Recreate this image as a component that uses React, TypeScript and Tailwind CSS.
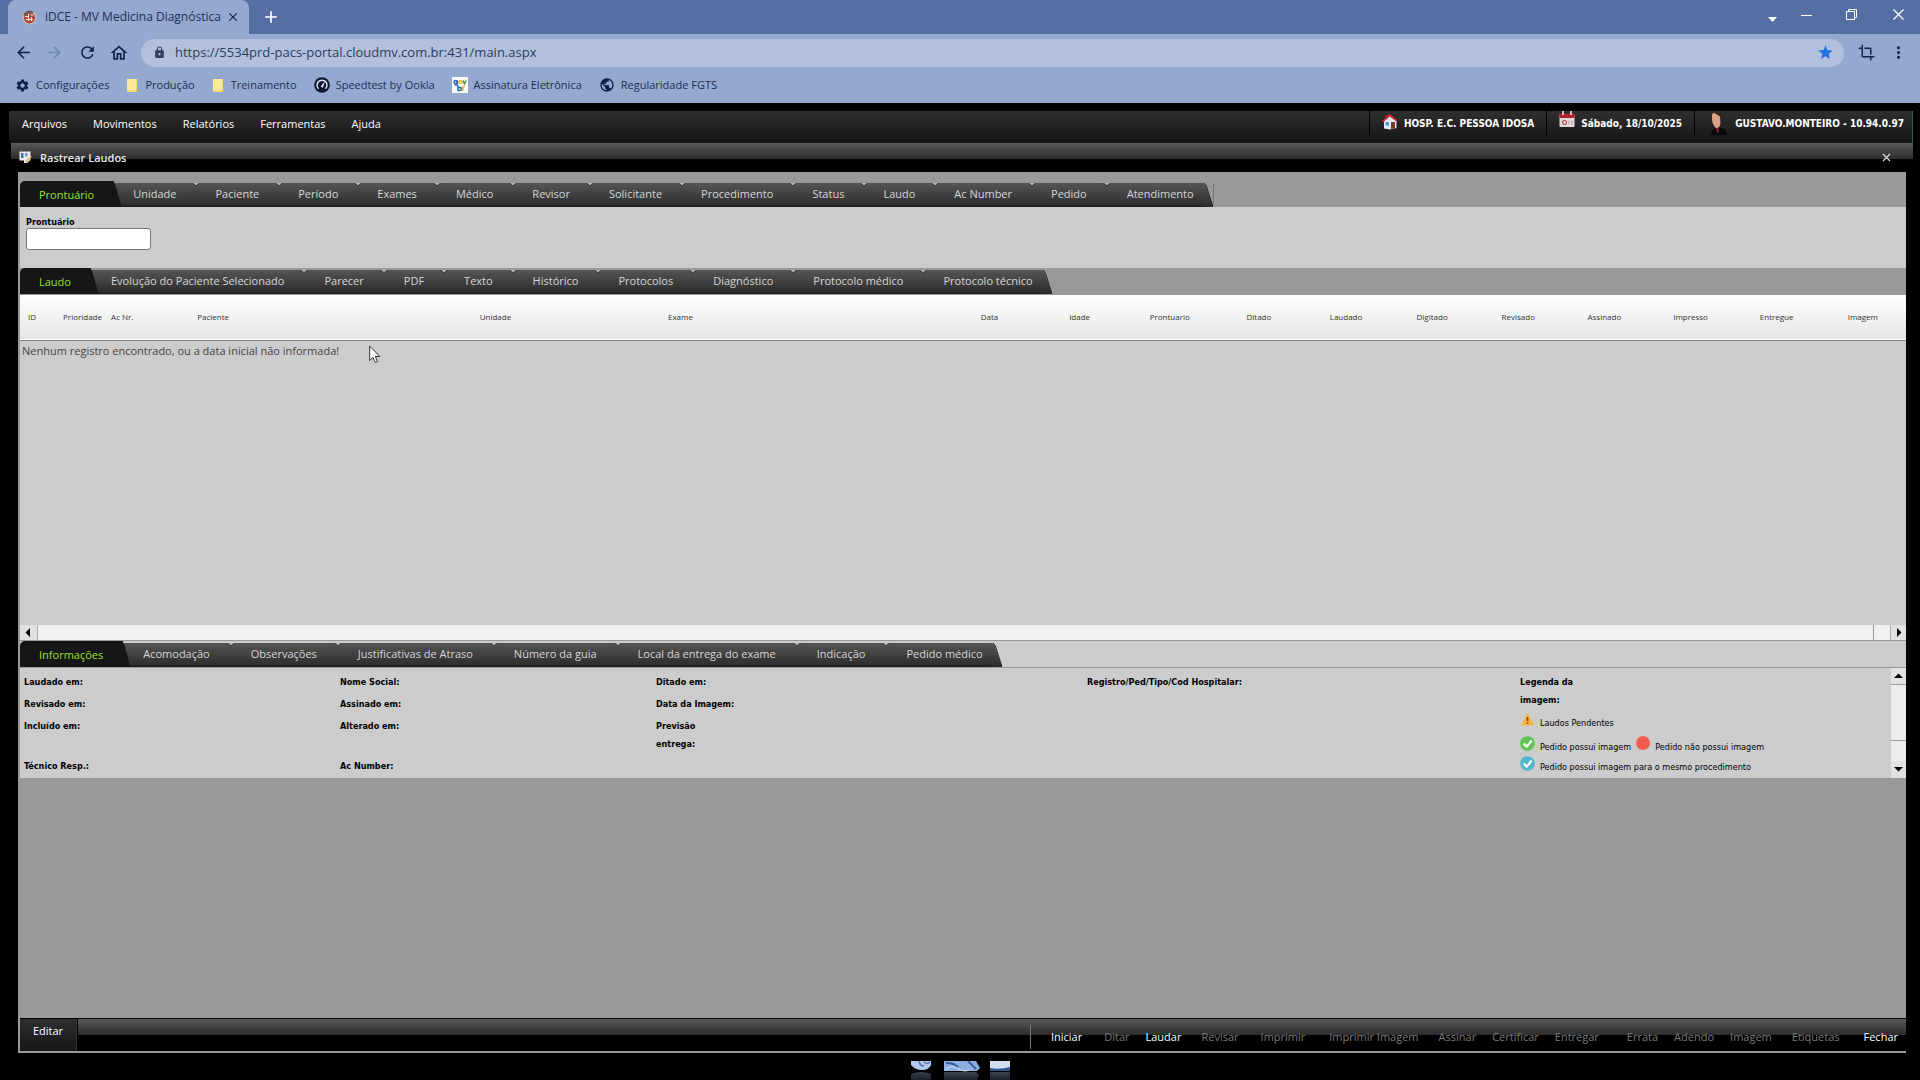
import type { ReactNode } from "react";
import {
  MdArrowBack,
  MdArrowForward,
  MdRefresh,
  MdOutlineHome,
  MdLock,
  MdStar,
  MdCrop,
  MdMoreVert,
  MdSettings,
  MdClose,
  MdAdd,
  MdPublic,
} from "react-icons/md";

const searchTabs = [
  "Prontuário", "Unidade", "Paciente", "Período", "Exames", "Médico", "Revisor", "Solicitante",
  "Procedimento", "Status", "Laudo", "Ac Number", "Pedido", "Atendimento",
];

const reportTabs = [
  "Laudo", "Evolução do Paciente Selecionado", "Parecer", "PDF", "Texto", "Histórico",
  "Protocolos", "Diagnóstico", "Protocolo médico", "Protocolo técnico",
];

const infoTabs = [
  "Informações", "Acomodação", "Observações", "Justificativas de Atraso", "Número da guia",
  "Local da entrega do exame", "Indicação", "Pedido médico",
];

const columns = [
  { name: "ID", col: "w-[35px]", align: "text-left pl-2" },
  { name: "Prioridade", col: "w-[48px]", align: "text-left pl-2" },
  { name: "Ac Nr.", col: "w-[86px]", align: "text-left pl-2" },
  { name: "Paciente", col: "w-[282px]", align: "text-left pl-2" },
  { name: "Unidade", col: "w-[188px]", align: "text-left pl-2" },
  { name: "Exame", col: "w-[284px]", align: "text-left pl-2" },
  { name: "Data", col: "w-[90px]", align: "text-center" },
  { name: "Idade", col: "w-[90px]", align: "text-center" },
  { name: "Prontuario", col: "w-[90px]", align: "text-center" },
  { name: "Ditado", col: "w-[88px]", align: "text-center" },
  { name: "Laudado", col: "w-[86px]", align: "text-center" },
  { name: "Digitado", col: "w-[86px]", align: "text-center" },
  { name: "Revisado", col: "w-[86px]", align: "text-center" },
  { name: "Assinado", col: "w-[86px]", align: "text-center" },
  { name: "Impresso", col: "w-[86px]", align: "text-center" },
  { name: "Entregue", col: "w-[86px]", align: "text-center" },
  { name: "Imagem", col: "w-[86px]", align: "text-center" },
];

const actions = [
  { name: "Iniciar", enabled: true, space: "ml-5" },
  { name: "Ditar", enabled: false, space: "ml-[22px]" },
  { name: "Laudar", enabled: true, space: "ml-4" },
  { name: "Revisar", enabled: false, space: "ml-5" },
  { name: "Imprimir", enabled: false, space: "ml-[22px]" },
  { name: "Imprimir Imagem", enabled: false, space: "ml-6" },
  { name: "Assinar", enabled: false, space: "ml-5" },
  { name: "Certificar", enabled: false, space: "ml-4" },
  { name: "Entregar", enabled: false, space: "ml-4" },
  { name: "Errata", enabled: false, space: "ml-7" },
  { name: "Adendo", enabled: false, space: "ml-4" },
  { name: "Imagem", enabled: false, space: "ml-4" },
  { name: "Etiquetas", enabled: false, space: "ml-5" },
  { name: "Fechar", enabled: true, space: "ml-6" },
];

function FolderIcon() {
  return (
    <svg width="13" height="15" viewBox="0 0 13 15" aria-hidden="true">
      <path d="M1 1h10v11h1v2H1z" fill="#f6dc7c" />
      <path d="M1 1h9v11H1z" fill="#fde99a" />
      <path d="M10 12h2v2h-2z" fill="#e3b94c" />
    </svg>
  );
}

function FaviconIcon() {
  return (
    <svg width="15" height="15" viewBox="0 0 15 15" aria-hidden="true">
      <circle cx="7.5" cy="7.5" r="7" fill="#c9b9b4" />
      <circle cx="7.5" cy="7.8" r="5.6" fill="#a84a3c" />
      <path d="M3 6.5h3.5M8.5 5h3M4 9.5h7M6.5 4v7M9.5 7v4" stroke="#f2dcd6" strokeWidth="1" />
      <path d="M2 5.500a6 6 0 0 1 9-3" stroke="#54504f" strokeWidth="1.500" fill="none" />
    </svg>
  );
}

function SpeedIcon() {
  return (
    <svg width="16" height="16" viewBox="0 0 16 16" aria-hidden="true">
      <circle cx="8" cy="8" r="7.8" fill="#10172e" />
      <path d="M4.600 11.800a5 5 0 1 1 6.800 0" stroke="#dfe7f8" strokeWidth="1.500" fill="none" />
      <path d="M7 9.500 10.200 5.500 8.800 10.300z" fill="#dfe7f8" stroke="#dfe7f8" strokeWidth=".6" />
    </svg>
  );
}

function GovIcon() {
  return (
    <svg width="16" height="16" viewBox="0 0 16 16" aria-hidden="true">
      <rect width="16" height="16" fill="#fbfcf8" />
      <circle cx="3.500" cy="5" r="1.500" fill="none" stroke="#2864b8" strokeWidth="1.400" />
      <path d="M5.200 3.500v4.500H2.500" fill="none" stroke="#2864b8" strokeWidth="1.400" />
      <circle cx="8.400" cy="5" r="1.600" fill="none" stroke="#e7b92c" strokeWidth="1.500" />
      <path d="m11 3.500 1.500 3.300L14.200 3.500" fill="none" stroke="#3d9950" strokeWidth="1.500" />
      <path d="M6 8.500v5h2a1.500 1.500 0 0 0 0-3H6" fill="none" stroke="#2864b8" strokeWidth="1.500" />
      <path d="M11 14v-4q1-.9 2-.6" fill="none" stroke="#e7b92c" strokeWidth="1.500" />
    </svg>
  );
}

function HouseIcon() {
  return (
    <svg width="16" height="17" viewBox="0 0 16 17" aria-hidden="true">
      <path d="M2 7v8.500l6 1L14.500 15V7L8 2z" fill="#dfe9f2" />
      <path d="M9 9h4v6.500L9 16z" fill="#7b3b25" />
      <path d="M3.500 9h3.500v3.500H3.500z" fill="#4b9ad1" />
      <path d="M8 3.500 14.500 8V7L8 2z" fill="#6c1218" />
      <path d="M0 8 7.500.8 15.800 7.500l-1.200 1.300L7.800 3.500 1.300 9.300z" fill="#cf2630" />
      <path d="M3 2h2v3L3 6z" fill="#a31a22" />
    </svg>
  );
}

function CalendarIcon() {
  return (
    <svg width="16" height="17" viewBox="0 0 16 17" aria-hidden="true">
      <rect x=".5" y="3" width="15" height="13" rx="1" fill="#e3d9da" />
      <path d="M.5 2.500h15V7H.5z" fill="#b0222d" />
      <path d="M4 0v4M12 0v4" stroke="#f4eeee" strokeWidth="1.500" />
      <circle cx="5.500" cy="11.500" r="2" fill="none" stroke="#c2474f" strokeWidth="1.200" />
      <path d="M10 9.500v4M13 9.500v4" stroke="#b9a7a9" strokeWidth="1.200" />
    </svg>
  );
}

function PersonIcon() {
  return (
    <svg width="16" height="23" viewBox="0 0 16 23" aria-hidden="true">
      <path d="M0 23c0-4 2-6 5-7h5c4 1 6 3 6 7z" fill="#0a0708" />
      <path d="M1 3q0-2.500 4-2.500T9.500 4v7q-.5 4-2.500 4.500l-1 1.500-2.500-2.500Q.5 11 1 3z" fill="#dba183" />
      <path d="M3 1Q5-.5 8 .5T11.500 5l-1.500 7L9 4.500 6 2.500z" fill="#3a221b" />
      <path d="m4.500 15.500 1.800 1.500 1-1.500.8 3-1.500 3.500z" fill="#8d2020" />
    </svg>
  );
}

function SearchReportIcon() {
  return (
    <svg width="13" height="13" viewBox="0 0 13 13" aria-hidden="true">
      <path d="M.5.500h11V9L8 12H5V9.500H.5z" fill="#e8edf6" />
      <path d="M2 2h2.500v5H2z" fill="#4868ad" />
      <path d="M6 2h2.500v3.500H6z" fill="#7e93c4" />
      <path d="m6 12.300 1-3L11.500 4.500l1.200 1.300-4.500 5.200z" fill="#e8bd68" />
    </svg>
  );
}

function CheckBadge({ color }: { color: string }) {
  return (
    <svg width="15" height="15" viewBox="0 0 15 15" aria-hidden="true" className="shrink-0">
      <circle cx="7.500" cy="7.500" r="7.300" fill={color} />
      <path d="m3.700 7.600 3 3 5-6" fill="none" stroke="#fff" strokeWidth="2.200" />
    </svg>
  );
}

function WarningIcon() {
  return (
    <svg width="15" height="15" viewBox="0 0 15 15" aria-hidden="true" className="shrink-0">
      <path d="M7.500 1.500 13.500 13h-12z" fill="#f4b545" stroke="#f4b545" strokeLinejoin="round" />
      <path d="M7.500 5v4M7.500 10.300v1.500" stroke="#9a3b12" strokeWidth="1.800" />
    </svg>
  );
}

interface TabBarProps {
  tabs: string[];
  label: string;
  tone: string;
  pad: string;
  edge?: boolean;
}

function TabBar({ tabs, label, tone, pad, edge }: TabBarProps) {
  return (
    <div role="tablist" aria-label={label} className={`flex h-[26px] items-stretch ${tone}`}>
      {tabs.map((tab, i) => {
        const active = i === 0;
        const last = i === tabs.length - 1;
        return (
          <button
            key={tab}
            type="button"
            role="tab"
            aria-selected={active}
            className={
              active
                ? "relative z-10 rounded-tl-[5px] bg-[#161616] pt-[2px] pr-5 pl-[19px] text-[#96e02f]"
                : last
                  ? "relative mt-[2px] border-b-2 border-[#222] bg-linear-to-b from-[#555] to-[#2e2e2e] pr-2 pl-5 text-[#d6d6d6]"
                  : `relative mt-[2px] border-b-2 border-[#222] bg-linear-to-b from-[#555] to-[#2e2e2e] text-[#d6d6d6] ${pad}`
            }
          >
            {tab}
            {active && (
              <svg className="absolute top-0 -right-2 h-[26px] w-[10px]" viewBox="0 0 10 26" aria-hidden="true">
                <path d="M0 0q3 1 4 6l5.500 20H0z" fill="#161616" />
              </svg>
            )}
            {!active && !last && (
              <svg className="absolute top-0 -right-1 z-10 h-[4px] w-[8px]" viewBox="0 0 8 4" aria-hidden="true">
                <path d="M0 0h8L4 3.500z" fill="#2a2a2a" />
                <path d="M1 0h6L4 2.600z" fill="#b2b2b2" />
              </svg>
            )}
          </button>
        );
      })}
      <svg className="mt-[2px] h-[24px] w-[11px]" viewBox="0 0 11 24" aria-hidden="true">
        <defs>
          <linearGradient id={`${label}-end`} x1="0" y1="0" x2="0" y2="1">
            <stop offset="0" stopColor="#555" />
            <stop offset="1" stopColor="#2a2a2a" />
          </linearGradient>
        </defs>
        <path d="M0 0q3 0 4 4l7 20H0z" fill={`url(#${label}-end)`} />
        <path d="M2 0q2 1 3 5l6 19" fill="none" stroke="#222" />
      </svg>
      {edge && <span className="my-[2px] w-px bg-[#777]" />}
    </div>
  );
}

function Arrow({ d }: { d: string }) {
  return (
    <svg width="9" height="9" viewBox="0 0 9 9" aria-hidden="true">
      <path d={d} fill="#000" />
    </svg>
  );
}

function Bookmark({ icon, children }: { icon: ReactNode; children: ReactNode }) {
  return (
    <a href="#" className="flex items-center gap-[6px]">
      {icon}
      {children}
    </a>
  );
}

function BrowserChrome() {
  return (
    <header className="bg-[#94a8d0] text-[#1f2f55]">
      <div className="flex h-[34px] items-stretch bg-[#556fa3] pl-2">
        <div className="flex w-[241px] items-center rounded-t-lg bg-[#94a8d0] pr-[9px] pl-[14px]">
          <FaviconIcon />
          <span className="ml-2 flex-1 text-xs whitespace-nowrap">iDCE - MV Medicina Diagnóstica</span>
          <button type="button" aria-label="Fechar aba" className="text-[#16244a]">
            <MdClose size={14} />
          </button>
        </div>
        <button type="button" aria-label="Nova aba" className="ml-3 text-white">
          <MdAdd size={20} />
        </button>
        <div className="ml-auto flex items-center text-white">
          <button type="button" aria-label="Pesquisar abas" className="mr-6 pt-1">
            <svg width="9" height="5" viewBox="0 0 9 5"><path d="M0 0h9L4.500 5z" fill="#fff" /></svg>
          </button>
          <button type="button" aria-label="Minimizar" className="mr-[34px] pb-1">
            <svg width="11" height="11" viewBox="0 0 11 11"><path d="M0 5.500h11" stroke="#fff" /></svg>
          </button>
          <button type="button" aria-label="Restaurar" className="mr-9 pb-[6px]">
            <svg width="11" height="11" viewBox="0 0 11 11" fill="none" stroke="#fff">
              <path d="M.5 2.500h8v8h-8zM2.500 2.500v-2h8v8h-2" />
            </svg>
          </button>
          <button type="button" aria-label="Fechar" className="mr-4 pb-[6px]">
            <svg width="11" height="11" viewBox="0 0 11 11"><path d="m.5.5 10 10m0-10-10 10" stroke="#fff" strokeWidth="1.200" /></svg>
          </button>
        </div>
      </div>
      <div className="flex h-[37px] items-center pl-[14px] text-[#14214a]">
        <button type="button" aria-label="Voltar"><MdArrowBack size={19} /></button>
        <button type="button" aria-label="Avançar" className="ml-3 text-[#7286b3]"><MdArrowForward size={19} /></button>
        <button type="button" aria-label="Recarregar" className="ml-[14px]"><MdRefresh size={19} /></button>
        <button type="button" aria-label="Página inicial" className="ml-3"><MdOutlineHome size={20} /></button>
        <div className="ml-3 flex h-7 flex-1 items-center rounded-full bg-[#b1c0dc] pr-[10px] pl-3">
          <MdLock size={13} className="text-[#35405e]" />
          <input
            aria-label="Endereço"
            defaultValue="https://5534prd-pacs-portal.cloudmv.com.br:431/main.aspx"
            className="ml-[9px] flex-1 bg-transparent text-[13px] text-[#2e3c60] outline-none"
          />
          <MdStar size={17} className="text-[#2573e0]" />
        </div>
        <button type="button" aria-label="Recortar" className="ml-[14px]"><MdCrop size={17} /></button>
        <button type="button" aria-label="Menu" className="mr-3 ml-[14px]"><MdMoreVert size={19} /></button>
      </div>
      <nav aria-label="Favoritos" className="flex h-8 items-center gap-[17px] pb-1 pl-[15px]">
        <Bookmark icon={<MdSettings size={15} className="text-[#14214a]" />}>Configurações</Bookmark>
        <Bookmark icon={<FolderIcon />}>Produção</Bookmark>
        <Bookmark icon={<FolderIcon />}>Treinamento</Bookmark>
        <Bookmark icon={<SpeedIcon />}>Speedtest by Ookla</Bookmark>
        <Bookmark icon={<GovIcon />}>Assinatura Eletrônica</Bookmark>
        <Bookmark icon={<MdPublic size={16} className="text-[#14214a]" />}>Regularidade FGTS</Bookmark>
      </nav>
    </header>
  );
}

function MenuBar() {
  const status = "flex h-6 items-center border-l border-black font-['DejaVu_Sans_Condensed','DejaVu_Sans',sans-serif] text-[10px] font-bold";
  return (
    <div className="ml-[9px] mr-[7px] flex h-8 items-start justify-between border-r border-[#2f5a4c] bg-linear-to-b from-[#2f2f2f] to-[#151515] text-white">
      <nav aria-label="Menu principal" className="flex gap-[26px] pt-1 pl-[13px] leading-[18px]">
        <button type="button">Arquivos</button>
        <button type="button">Movimentos</button>
        <button type="button">Relatórios</button>
        <button type="button">Ferramentas</button>
        <button type="button">Ajuda</button>
      </nav>
      <div className="flex">
        <div className={`${status} gap-[6px] px-3`}>
          <span className="pb-1"><HouseIcon /></span>HOSP. E.C. PESSOA IDOSA
        </div>
        <div className={`${status} gap-[6px] px-3`}>
          <span className="pb-2"><CalendarIcon /></span>Sábado, 18/10/2025
        </div>
        <div className={`${status} gap-2 pr-2 pl-4`}>
          <PersonIcon />GUSTAVO.MONTEIRO - 10.94.0.97
        </div>
      </div>
    </div>
  );
}

function Scroller() {
  return (
    <div className="flex h-[15px] items-stretch bg-[#f1f1f1]">
      <button type="button" aria-label="Rolar para a esquerda" className="grid w-[18px] place-items-center border-r border-[#aaa] bg-[#e2e2e2]">
        <Arrow d="M6 0v9L1.500 4.500z" />
      </button>
      <span className="flex-1 border-r border-[#999]" />
      <span className="w-4" />
      <button type="button" aria-label="Rolar para a direita" className="grid w-4 place-items-center border-l border-[#aaa] bg-[#e2e2e2]">
        <Arrow d="M3 0v9l4.500-4.500z" />
      </button>
    </div>
  );
}

function InfoPanel() {
  const legend = "flex items-center gap-[5px] font-['DejaVu_Sans_Condensed','DejaVu_Sans',sans-serif] text-[9px] font-normal";
  return (
    <section className="flex h-[111px] border-t border-[#999] bg-[#ccc]">
      <div className="grid flex-1 grid-cols-[316fr_316fr_431fr_433fr_371fr] pt-[5px] pl-1 font-['DejaVu_Sans_Condensed','DejaVu_Sans',sans-serif] text-[9px] leading-[18px] font-bold text-black">
        <div className="flex flex-col gap-1">
          <span>Laudado em:</span>
          <span>Revisado em:</span>
          <span className="h-9">Incluído em:</span>
          <span>Técnico Resp.:</span>
        </div>
        <div className="flex flex-col gap-1">
          <span>Nome Social:</span>
          <span>Assinado em:</span>
          <span className="h-9">Alterado em:</span>
          <span>Ac Number:</span>
        </div>
        <div className="flex flex-col gap-1">
          <span>Ditado em:</span>
          <span>Data da Imagem:</span>
          <span>Previsão<br />entrega:</span>
        </div>
        <div><span>Registro/Ped/Tipo/Cod Hospitalar:</span></div>
        <div>
          <div>Legenda da<br />imagem:</div>
          <div className={`${legend} h-6`}>
            <span className="pb-1"><WarningIcon /></span>
            <span className="pt-1">Laudos Pendentes</span>
          </div>
          <div className={`${legend} h-5`}>
            <CheckBadge color="#62c554" />
            <span className="pt-2">Pedido possui imagem</span>
            <svg width="14" height="14" viewBox="0 0 14 14" aria-hidden="true"><circle cx="7" cy="7" r="7" fill="#f45b50" /></svg>
            <span className="pt-2">Pedido não possui imagem</span>
          </div>
          <div className={`${legend} h-5`}>
            <CheckBadge color="#4fb6cb" />
            <span className="pt-2">Pedido possui imagem para o mesmo procedimento</span>
          </div>
        </div>
      </div>
      <div className="flex w-[15px] flex-col bg-[#ededed]">
        <button type="button" aria-label="Rolar para cima" className="grid h-[17px] place-items-center border-b border-[#999] bg-[#e2e2e2]">
          <Arrow d="M0 6h9L4.500 1.500z" />
        </button>
        <span className="flex-1 border-b border-[#999]" />
        <span className="h-5" />
        <button type="button" aria-label="Rolar para baixo" className="grid h-[17px] place-items-center bg-[#e2e2e2]">
          <Arrow d="M0 2h9L4.500 6.500z" />
        </button>
      </div>
    </section>
  );
}

function Dock() {
  return (
    <div className="flex h-[27px] items-end justify-center">
      <svg width="101" height="19" viewBox="0 0 101 19" aria-hidden="true">
        <defs>
          <linearGradient id="fade" x1="0" y1="0" x2="0" y2="1">
            <stop offset="0" stopColor="#3b4350" />
            <stop offset="1" stopColor="#1b2029" />
          </linearGradient>
        </defs>
        <path d="M1 0h20v4q-2 5-9 5T1 4z" fill="#b5c8ea" />
        <path d="M9 0q1 5 5 5M14 1q3 3 6 0" stroke="#5276b3" strokeWidth="1.500" fill="none" />
        <path d="M34 0h32l4 7-3 3H34z" fill="#8eaede" />
        <path d="M35 9q6-6 12-2t12 2" stroke="#b9d0f2" strokeWidth="1.500" fill="none" />
        <path d="M36 2q8 0 12 4M58 0l8 8" stroke="#375f9f" strokeWidth="2" fill="none" />
        <path d="M80 0h20v9H80z" fill="#d3def1" />
        <path d="M80 7q10 2 20-1v4H80z" fill="#33588f" />
        <path d="M1 19v-6q10-4 20 0v6zM34 19v-8h32l3 3-2 5zM80 19v-8h20v8z" fill="url(#fade)" />
      </svg>
    </div>
  );
}

export default function App() {
  return (
    <div className="flex min-h-screen flex-col bg-black font-['Open_Sans','Noto_Sans',sans-serif] text-[11px]">
      <BrowserChrome />
      <div className="h-2" />
      <MenuBar />

      <main className="flex flex-1 flex-col">
        <div className="ml-[11px] mr-[7px] flex h-[29px] items-center bg-linear-to-b from-[#5a5a5a] from-0% via-[#2c2c2c] via-55% to-black to-55% pr-[22px] pl-2 text-[#e8e8e8]">
          <SearchReportIcon />
          <h1 className="ml-2 pt-px font-semibold">Rastrear Laudos</h1>
          <button type="button" aria-label="Fechar Rastrear Laudos" className="ml-auto">
            <svg width="9" height="9" viewBox="0 0 9 9"><path d="m1 1 7 7m0-7L1 8" stroke="#ddd" strokeWidth="1.200" /></svg>
          </button>
        </div>

        <div className="ml-[18px] mr-[14px] flex flex-1 flex-col border-b-2 border-l-2 border-[#999] bg-[#999]">
          <div className="h-[9px]" />
          <TabBar tabs={searchTabs} label="busca" tone="bg-[#999]" pad="pr-5 pl-[19px]" edge />
          <section className="flex h-[61px] flex-col items-start bg-[#ccc] pt-[10px] pl-[6px]">
            <label
              htmlFor="prontuario"
              className="font-['DejaVu_Sans_Condensed','DejaVu_Sans',sans-serif] text-[9px] leading-[11px] font-bold text-black"
            >
              Prontuário
            </label>
            <input id="prontuario" className="h-[22px] w-[125px] rounded-[3px] border border-[#777] bg-white px-1" />
          </section>

          <TabBar tabs={reportTabs} label="laudos" tone="bg-[#999]" pad="px-5" />
          <div className="h-px bg-[#999]" />
          <section className="flex h-[330px] flex-col bg-[#ccc]">
            <table className="w-full table-fixed border-collapse">
              <thead>
                <tr className="h-[45px] border-b border-[#808080] bg-linear-to-b from-white to-[#e6e6e6] text-[8px] text-[#333]">
                  {columns.map((c) => (
                    <th key={c.name} scope="col" className={`font-normal whitespace-nowrap ${c.col} ${c.align}`}>{c.name}</th>
                  ))}
                </tr>
              </thead>
              <tbody>
                <tr>
                  <td colSpan={17} className="pl-[2px] leading-5 text-[#444]">
                    Nenhum registro encontrado, ou a data inicial não informada!
                  </td>
                </tr>
              </tbody>
            </table>
          </section>
          <Scroller />
          <div className="h-px bg-[#999]" />

          <TabBar tabs={infoTabs} label="detalhes" tone="bg-[#ccc]" pad="pr-[21px] pl-5" />
          <InfoPanel />

          <div className="flex-1" />

          <footer className="flex h-[33px] border-t border-black bg-black text-[#6f6f6f]">
            <button type="button" className="mr-px w-[57px] border-r border-[#333] bg-linear-to-b from-[#2f2f2f] to-[#161616] pb-2 text-white">Editar</button>
            <div className="flex flex-1 items-center justify-end bg-linear-to-b from-[#5a5a5a] from-0% via-[#2c2c2c] via-50% to-black to-50% pt-1 pr-2">
              <span className="h-6 w-px bg-[#777]" />
              {actions.map((a) => (
                <button key={a.name} type="button" disabled={!a.enabled} className={`${a.space} ${a.enabled ? "text-white" : "text-[#7a7a7a]"}`}>
                  {a.name}
                </button>
              ))}
            </div>
          </footer>
        </div>
        <Dock />
      </main>

      <svg className="absolute top-[345px] left-[369px] h-[19px] w-[12px]" viewBox="0 0 12 19" aria-hidden="true">
        <path d="M.7 1v14.500l3.300-3.200 2.300 5.200 2.200-1-2.200-5h4.500z" fill="#fff" stroke="#333" />
      </svg>
    </div>
  );
}
